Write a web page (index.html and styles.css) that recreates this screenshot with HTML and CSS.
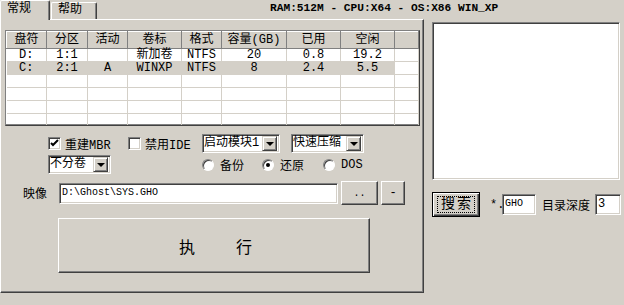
FILE: index.html
```html
<!DOCTYPE html>
<html lang="zh-CN">
<head>
    <meta charset="UTF-8">
    <title>Ghost</title>
    <link rel="stylesheet" href="styles.css">
</head>
<body>
    <div class="app">
        <div class="topbar">
            <div class="tabs">
                <div class="tab active">常规</div>
                <div class="tab">帮助</div>
            </div>
            <div class="status">RAM:512M - CPU:X64 - OS:X86 WIN_XP</div>
        </div>

        <div class="main">
            <div class="panel">
                <div class="listview">
                    <table>
                        <thead>
                            <tr>
                                <th class="c1">盘符</th>
                                <th class="c2">分区</th>
                                <th class="c3">活动</th>
                                <th class="c4">卷标</th>
                                <th class="c5">格式</th>
                                <th class="c6">容量(GB)</th>
                                <th class="c7">已用</th>
                                <th class="c8">空闲</th>
                                <th class="c9"></th>
                            </tr>
                        </thead>
                        <tbody>
                            <tr>
                                <td>D:</td><td>1:1</td><td></td><td>新加卷</td><td>NTFS</td><td>20</td><td>0.8</td><td>19.2</td><td class="blank"></td>
                            </tr>
                            <tr class="sel">
                                <td>C:</td><td>2:1</td><td>A</td><td>WINXP</td><td>NTFS</td><td>8</td><td>2.4</td><td>5.5</td><td class="blank"></td>
                            </tr>
                            <tr><td></td><td></td><td></td><td></td><td></td><td></td><td></td><td></td><td></td></tr>
                            <tr><td></td><td></td><td></td><td></td><td></td><td></td><td></td><td></td><td></td></tr>
                            <tr><td></td><td></td><td></td><td></td><td></td><td></td><td></td><td></td><td></td></tr>
                            <tr><td></td><td></td><td></td><td></td><td></td><td></td><td></td><td></td><td></td></tr>
                        </tbody>
                    </table>
                </div>

                <div class="row row1">
                    <label class="check w80">
                        <span class="box on">
                            <svg width="9" height="9" viewBox="0 0 9 9"><path d="M1 4 L3 6 L8 1" fill="none" stroke="#000" stroke-width="2"/></svg>
                        </span>
                        重建MBR
                    </label>
                    <label class="check w74"><span class="box"></span>禁用IDE</label>
                    <div class="select s1"><span class="val">启动模块1</span><span class="arrow"><i></i></span></div>
                    <div class="select s2"><span class="val">快速压缩</span><span class="arrow"><i></i></span></div>
                </div>

                <div class="row row2">
                    <div class="select s3"><span class="val">不分卷</span><span class="arrow"><i></i></span></div>
                    <label class="radio r1"><span class="dot"></span>备份</label>
                    <label class="radio r2"><span class="dot on"></span>还原</label>
                    <label class="radio"><span class="dot"></span>DOS</label>
                </div>

                <div class="row row3">
                    <span class="lbl">映像</span>
                    <div class="field path">D:\Ghost\SYS.GHO</div>
                    <div class="btn b-dots">..</div>
                    <div class="btn b-minus">-</div>
                </div>

                <div class="row row4">
                    <div class="btn run"><span>执</span><span>行</span></div>
                </div>
            </div>

            <div class="side">
                <div class="field listbox"></div>
                <div class="search">
                    <div class="btn default"><span class="focus">搜索</span></div>
                    <span class="star">*.</span>
                    <div class="field ext">GHO</div>
                    <span class="depth">目录深度</span>
                    <div class="field num">3</div>
                </div>
            </div>
        </div>
    </div>
</body>
</html>
```

FILE: styles.css
```css
*{
    padding: 0;
    margin: 0;
    box-sizing: border-box;
}
body{
    background-color: #d4d0c8;
    font-family: "Liberation Mono", "Noto Sans CJK SC", monospace;
    font-size: 12px;
    color: #000;
    width: 624px;
    height: 305px;
    overflow: hidden;
}

/* 顶部 */
.topbar{
    height: 19px;
    display: flex;
}
.tabs{
    display: flex;
    align-items: flex-end;
    width: 97px;
}
.tab{
    height: 17px;
    width: 46px;
    margin-left: 1px;
    padding-left: 6px;
    line-height: 15px;
    border-top: 1px solid #fff;
    border-left: 1px solid #fff;
    border-right: 1px solid #404040;
    box-shadow: inset -1px 0 #808080;
    border-radius: 2px 2px 0 0;
}
.tab.active{
    width: 50px;
    height: 20px;
    margin-left: 0;
    margin-bottom: -1px;
    line-height: 16px;
    position: relative;
    z-index: 1;
    background-color: #d4d0c8;
}
.status{
    margin-left: 173px;
    padding-top: 2px;
    font-size: 11.2px;
    line-height: 13px;
    font-weight: bold;
}

.main{
    display: flex;
}

/* 左侧面板 */
.panel{
    width: 424px;
    height: 274px;
    border-top: 1px solid #fff;
    border-left: 1px solid #fff;
    border-right: 1px solid #404040;
    border-bottom: 1px solid #404040;
    box-shadow: inset -1px -1px #808080;
    padding-top: 10px;
    padding-left: 4px;
}

.listview{
    width: 415px;
    height: 96px;
    background-color: #fff;
    border: 1px solid;
    border-color: #808080 #404040 #404040 #808080;
    box-shadow: inset -1px -1px #808080;
    overflow: hidden;
}
.listview table{
    border-collapse: collapse;
    table-layout: fixed;
    width: 412px;
}
.listview th{
    height: 17px;
    font-weight: normal;
    background-color: #d4d0c8;
    border-top: 1px solid #fff;
    border-left: 1px solid #fff;
    border-right: 1px solid #808080;
    border-bottom: 1px solid #808080;
    line-height: 14px;
    padding: 0;
}
.listview td{
    height: 13px;
    line-height: 12px;
    text-align: center;
    padding: 0;
    border-right: 1px solid #d4d0c8;
    border-bottom: 1px solid #d4d0c8;
    white-space: nowrap;
}
.listview tr.sel td{
    background-color: #d4d0c8;
}
.listview tr.sel td.blank{
    background-color: #fff;
}
.c1{ width: 40px; }
.c2{ width: 41px; }
.c3{ width: 40px; }
.c4{ width: 54px; }
.c5{ width: 40px; }
.c6{ width: 65px; }
.c7{ width: 54px; }
.c8{ width: 54px; }
.c9{ width: 24px; }

/* 选项 */
.row{
    display: flex;
    align-items: center;
}
.row1{
    margin-top: 8px;
    padding-left: 43px;
    height: 19px;
}
.row2{
    margin-top: 2px;
    padding-left: 43px;
    height: 19px;
}
.check{
    display: flex;
    align-items: center;
    gap: 4px;
}
.w80{ width: 80px; }
.w74{ width: 74px; }
.box{
    width: 13px;
    height: 13px;
    background-color: #fff;
    border: 1px solid;
    border-color: #808080 #fff #fff #808080;
    box-shadow: inset 1px 1px #404040, inset -1px -1px #d4d0c8;
    display: flex;
    align-items: center;
    justify-content: center;
}

.select{
    height: 19px;
    display: flex;
    align-items: center;
    background-color: #fff;
    border: 1px solid;
    border-color: #808080 #fff #fff #808080;
    box-shadow: inset 1px 1px #404040, inset -1px -1px #d4d0c8;
    padding: 2px 2px 2px 1px;
}
.select .val{
    flex: 1;
    line-height: 13px;
    white-space: nowrap;
}
.select .arrow{
    flex: none;
    width: 15px;
    height: 15px;
    background-color: #d4d0c8;
    border: 1px solid;
    border-color: #d4d0c8 #404040 #404040 #d4d0c8;
    box-shadow: inset 1px 1px #fff, inset -1px -1px #808080;
    display: flex;
    align-items: center;
    justify-content: center;
}
.select .arrow i{
    width: 0;
    height: 0;
    border-left: 4px solid transparent;
    border-right: 4px solid transparent;
    border-top: 4px solid #000;
}
.s1{ width: 78px; }
.s2{ width: 73px; margin-left: 11px; }
.s3{ width: 63px; margin-right: 91px; }

.radio{
    display: flex;
    align-items: center;
    gap: 6px;
}
.r1{ width: 60px; }
.r2{ width: 61px; }
.dot{
    width: 12px;
    height: 12px;
    border-radius: 50%;
    background-color: #fff;
    border: 1px solid;
    border-color: #808080 #fff #fff #808080;
    box-shadow: inset 1px 1px #404040;
    display: flex;
    align-items: center;
    justify-content: center;
}
.dot.on::after{
    content: "";
    width: 4px;
    height: 4px;
    border-radius: 50%;
    background-color: #000;
}

.row3{
    margin-top: 7px;
    padding-left: 18px;
    height: 24px;
}
.lbl{
    width: 36px;
}
.field{
    background-color: #fff;
    border: 1px solid;
    border-color: #808080 #fff #fff #808080;
    box-shadow: inset 1px 1px #404040, inset -1px -1px #d4d0c8;
    height: 21px;
    line-height: 18px;
    padding-left: 2px;
    white-space: nowrap;
}
.path{
    width: 279px;
    font-size: 10px;
}
.btn{
    background-color: #d4d0c8;
    border: 1px solid;
    border-color: #fff #404040 #404040 #fff;
    box-shadow: inset -1px -1px #808080;
    display: flex;
    align-items: center;
    justify-content: center;
}
.b-dots{
    width: 37px;
    height: 24px;
    margin-left: 3px;
    font-size: 10px;
}
.b-minus{
    width: 24px;
    height: 24px;
    margin-left: 3px;
}

.row4{
    margin-top: 13px;
    padding-left: 53px;
}
.run{
    width: 312px;
    height: 55px;
    font-size: 16px;
    gap: 41px;
    padding-left: 3px;
}

/* 右侧 */
.side{
    margin-left: 8px;
    padding-top: 3px;
}
.listbox{
    width: 188px;
    height: 158px;
}
.search{
    margin-top: 12px;
    display: flex;
    align-items: center;
}
.default{
    width: 48px;
    height: 25px;
    border: 1px solid #000;
    box-shadow: inset 1px 1px #fff, inset -1px -1px #404040, inset -2px -2px #808080;
}
.focus{
    border: 1px dotted #000;
    width: 38px;
    height: 17px;
    line-height: 15px;
    text-align: center;
    font-size: 14px;
    letter-spacing: 2px;
    padding-left: 2px;
}
.star{
    margin-left: 10px;
    width: 12px;
}
.ext{
    width: 34px;
    font-size: 10px;
}
.depth{
    margin-left: 6px;
    width: 53px;
}
.num{
    width: 26px;
}
```
